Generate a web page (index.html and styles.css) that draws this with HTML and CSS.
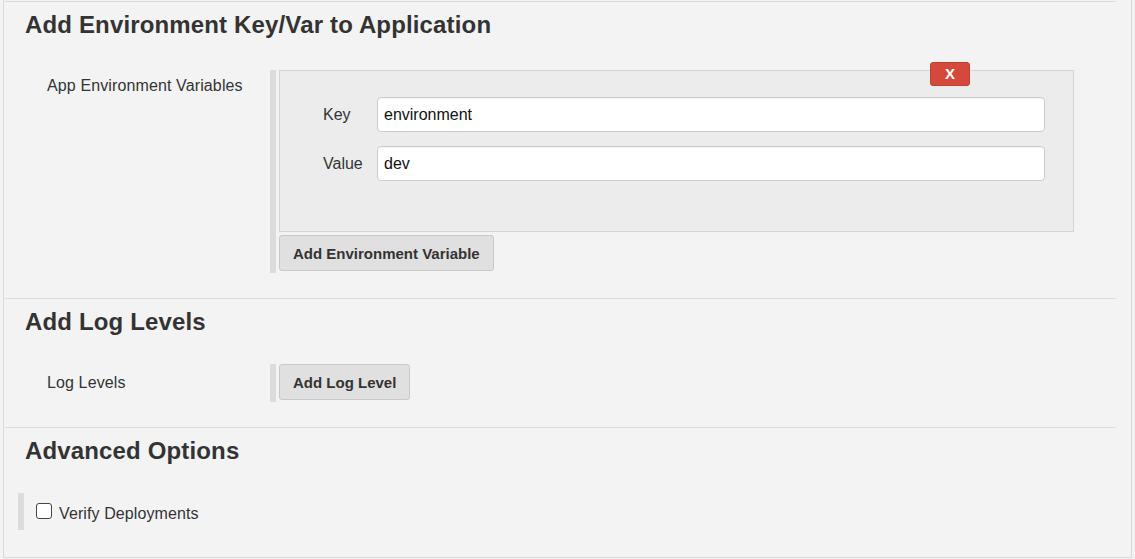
FILE: index.html
```html
<!DOCTYPE html>
<html>
<head>
<meta charset="utf-8">
<link rel="stylesheet" href="styles.css">
</head>
<body>
<div class="panel">
  <div class="section">
    <h2 class="section-title">Add Environment Key/Var to Application</h2>
    <div class="row row-first">
      <div class="row-label label-env">App Environment Variables</div>
      <div class="row-content">
        <div class="repeat">
          <div class="chunk">
            <button class="delete-btn" type="button">X</button>
            <div class="field">
              <label class="field-label">Key</label>
              <input class="field-input" type="text" value="environment">
            </div>
            <div class="field">
              <label class="field-label">Value</label>
              <input class="field-input" type="text" value="dev">
            </div>
          </div>
          <button class="add-btn add-btn-env" type="button">Add Environment Variable</button>
        </div>
      </div>
    </div>
  </div>

  <div class="section">
    <h2 class="section-title">Add Log Levels</h2>
    <div class="row">
      <div class="row-label label-log">Log Levels</div>
      <div class="row-content">
        <div class="repeat">
          <button class="add-btn" type="button">Add Log Level</button>
        </div>
      </div>
    </div>
  </div>

  <div class="section section-last">
    <h2 class="section-title">Advanced Options</h2>
    <div class="option-row">
      <input class="checkbox" type="checkbox" id="verify">
      <label class="option-label" for="verify">Verify Deployments</label>
    </div>
  </div>
</div>
</body>
</html>
```

FILE: styles.css
```css
* { box-sizing: border-box; }

html, body {
  margin: 0;
  padding: 0;
  background: #f3f3f3;
  font-family: "Liberation Sans", Arial, sans-serif;
  color: #333;
}

.panel {
  margin-left: 3px;
  width: 1129px;
  padding-top: 1px;
  border: 1px solid #d9d9d9;
  border-top: none;
  background: #f3f3f3;
}

.section {
  margin: 0 15px 0 1px;
  padding: 9px 0 25px 20px;
  border-top: 1px solid #dcdcdc;
}

.section-last {
  padding-bottom: 27px;
}

.section-title {
  margin: 0;
  font-size: 24px;
  line-height: 28px;
  font-weight: bold;
  letter-spacing: 0.15px;
  color: #333;
}

.row {
  display: flex;
  align-items: flex-start;
  margin-top: 28px;
}

.row-first {
  margin-top: 31px;
}

.row-label {
  width: 245px;
  flex: none;
  padding-left: 22px;
  font-size: 16px;
  line-height: 20px;
  letter-spacing: 0.12px;
  color: #333;
}

.label-env { padding-top: 6px; }
.label-log { padding-top: 9px; }

.row-content {
  flex: 1;
}

.repeat {
  border-left: 6px solid #dcdcdc;
  padding: 0 0 2px 3px;
}

.chunk {
  position: relative;
  margin-right: 42px;
  margin-bottom: 3px;
  padding: 26px 28px 50px 43px;
  background: #ececec;
  border: 1px solid #d5d5d5;
  display: flex;
  flex-direction: column;
  gap: 14px;
}

.delete-btn {
  position: absolute;
  top: -9px;
  right: 103px;
  width: 40px;
  height: 24px;
  padding: 0;
  border: 1px solid #c2402f;
  border-radius: 3px;
  background: #d4493b;
  color: #fff;
  font-family: "Liberation Sans", Arial, sans-serif;
  font-size: 15px;
  font-weight: bold;
  line-height: 22px;
  text-align: center;
}

.field {
  display: flex;
  align-items: center;
}

.field-label {
  width: 54px;
  flex: none;
  font-size: 16px;
  line-height: 20px;
  color: #333;
}

.field-input {
  flex: 1;
  height: 35px;
  margin: 0;
  padding: 0 6px;
  border: 1px solid #cccccc;
  border-radius: 4px;
  background: #fff;
  font-family: "Liberation Sans", Arial, sans-serif;
  font-size: 16px;
  color: #111;
  box-shadow: inset 0 1px 1px rgba(0, 0, 0, 0.05);
}

.add-btn {
  display: block;
  height: 36px;
  margin: 0;
  padding: 0 13px;
  border: 1px solid #c9c9c9;
  border-radius: 3px;
  background: #e0e0e0;
  color: #333;
  font-family: "Liberation Sans", Arial, sans-serif;
  font-size: 15px;
  font-weight: bold;
  line-height: 36px;
}

.option-row {
  display: flex;
  align-items: flex-start;
  margin-top: 28px;
  margin-left: -7px;
  height: 37px;
  border-left: 6px solid #dcdcdc;
  padding-left: 12px;
}

.checkbox {
  -webkit-appearance: none;
  appearance: none;
  width: 16px;
  height: 16px;
  margin: 10px 7px 0 0;
  border: 1px solid #444;
  border-radius: 3px;
  background: #fff;
  flex: none;
}

.option-label {
  padding-top: 11px;
  font-size: 16px;
  line-height: 20px;
  letter-spacing: 0.1px;
  color: #333;
}
```
